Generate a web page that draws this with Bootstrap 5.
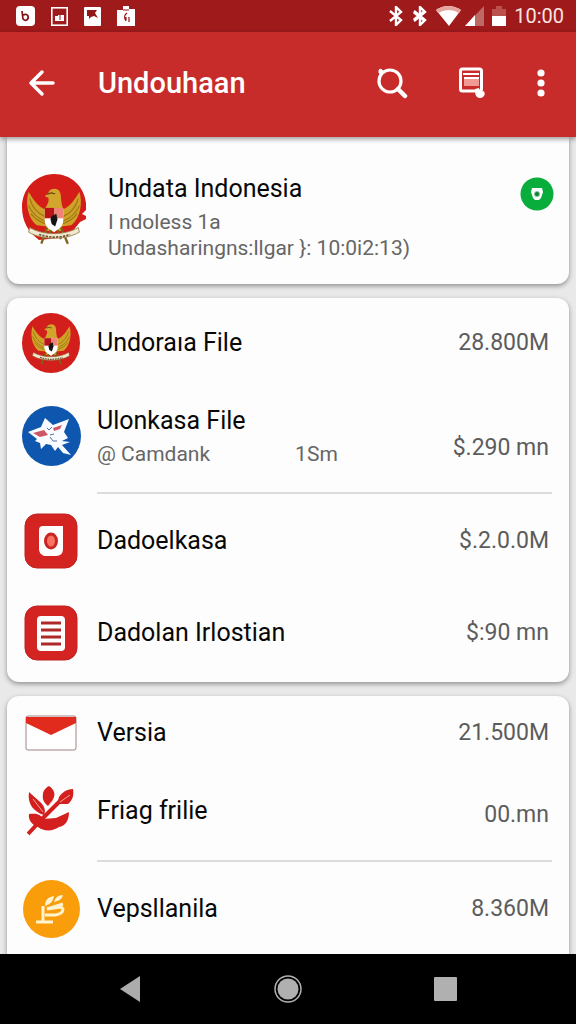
<!DOCTYPE html>
<html lang="id">
<head>
<meta charset="utf-8">
<meta name="viewport" content="width=device-width, initial-scale=1">
<title>Undouhaan</title>
<link href="https://cdn.jsdelivr.net/npm/bootstrap@5.3.0/dist/css/bootstrap.min.css" rel="stylesheet">
<style>
body{font-family:Roboto,"Liberation Sans",sans-serif;background:#e9e9ea;color:#0b0b0b}
svg{display:block;flex-shrink:0}
.status{height:32px;background:#9f1a1b;padding:0 12px 0 16px;font-size:20px;line-height:32px;color:#fbe4e2}
.appbar{height:105px;background:#c72c2a;padding:0 22px 4px 28px;box-shadow:0 2px 5px rgba(0,0,0,.4);z-index:2}
.appbar h1{font-size:29px;line-height:40px;font-weight:500;margin:0 auto 0 42px}
.tools{gap:50px}
.tool{line-height:0}
.content{margin:0 7px;gap:14px;min-height:0}
.panel{border:0;border-radius:12px;box-shadow:0 2px 5px rgba(0,0,0,.38);background:#fdfdfd}
.panel-top{border-radius:0 0 12px 12px;min-height:147px;padding:36px 15px 22px 15px}
.panel-last{border-radius:12px 12px 0 0}
.name{font-size:25px;line-height:32px;color:#080808}
.detail{font-size:21px;line-height:26px;color:#666}
.amount{font-size:23px;line-height:32px;color:#5c5c5c}
.entry{display:grid;grid-template-columns:60px 1fr auto;column-gap:16px;align-items:center;padding:0 20px 0 14px;min-height:90px}
.entry svg{justify-self:center}
.h-mail{min-height:74px}
.h-tall{min-height:104px}
.h-mid{min-height:94px}
.rule{height:2px;margin:0 17px 0 90px;background:#dcdcdc}
.sysbar{height:70px;background:#000;padding:0 100px;z-index:2}
</style>
</head>
<body>
<svg width="0" height="0" class="position-absolute" aria-hidden="true">
<defs>
<symbol id="garuda" viewBox="4 8 52 50">
<path d="M8 12C5 21 7 35 15 41l9 1V28C17 26 12 19 8 12Z" fill="#cfa126"/>
<path d="M52 12c3 9 1 23-7 29l-9 1V28c7-2 12-9 16-16Z" fill="#cfa126"/>
<path d="M9 18c2 8 7 13 14 16M8 24c3 7 8 11 15 14M10 31c3 4 7 7 13 9M51 18c-2 8-7 13-14 16M52 24c-3 7-8 11-15 14M50 31c-3 4-7 7-13 9" fill="none" stroke="#9a7618" stroke-width="1"/>
<path d="M25 13c1-4 8-5 10-1 2 4 0 9 4 17l-3 17H24l-3-17c4-7 5-9 4-12l-3-1Z" fill="#d2a52c"/>
<path d="M24 14l4-1 3 1" stroke="#604a10" fill="none"/>
<path d="M22 26h16v11c0 5-4 8-8 10-4-2-8-5-8-10Z" fill="#fff"/>
<path d="M22 26h8v9h-8Z" fill="#b91518"/><path d="M30 26h8v9h-8Z" fill="#ee8377"/>
<path d="M28 33l4-2 1 5-2 6-3-2-1-4Z" fill="#151515"/>
<path d="M24 43l-5 14M36 43l6 14M27 45l-2 8M33 45l3 8" stroke="#80621a" stroke-width="2"/>
<path d="M9 43c12 7 30 7 42 0l1 4c-12 7-32 7-44 0Z" fill="#f0e8d0" stroke="#927842" stroke-width=".7"/>
<path d="M17 49c9 3 18 3 27 0" fill="none" stroke="#6d5a32" stroke-width="1.5" stroke-dasharray="2 1"/>
</symbol>
<symbol id="bt" viewBox="0 0 16 20"><path d="M2 5l11 9-5 5V1l5 5L2 15" fill="none" stroke="#fff" stroke-width="2.4"/></symbol>
</defs>
</svg>
<div class="d-flex flex-column vh-100 overflow-hidden">
<div class="status d-flex align-items-center justify-content-between flex-shrink-0">
<div class="d-flex align-items-center gap-3">
<svg width="19" height="20" viewBox="0 0 19 20"><rect width="19" height="20" rx="4" fill="#fff"/><path d="M6 5l1 8c3 3 6 0 5-3-1-2-3-2-5-1" fill="none" stroke="#841313" stroke-width="1.7"/></svg>
<svg width="17" height="19" viewBox="0 0 17 19"><rect x=".8" y=".8" width="15.4" height="17.4" fill="none" stroke="#fff" stroke-width="1.6"/><path d="M4 9h3V8h6v6H4Z" fill="#fff"/><path d="M9 8v5" stroke="#9f1a1b"/></svg>
<svg width="17" height="19" viewBox="0 0 17 19"><rect width="17" height="19" rx="1" fill="#fff"/><path d="M3 3h10l-2 3 3 5-4-2-3 1-2 2V9H3Z" fill="#941516"/></svg>
<svg width="18" height="20" viewBox="0 0 18 20"><path d="M0 4h6V0h6v3h6v17H0Z" fill="#fff"/><path d="M6 4h6M10 7c-3 2-3 5-1 8M9 11v3M12 11v5" fill="none" stroke="#941516" stroke-width="1.2"/></svg>
</div>
<div class="d-flex align-items-center">
<svg width="16" height="20" class="me-2"><use href="#bt"/></svg>
<svg width="16" height="20" class="me-2"><use href="#bt"/><path d="M2 6l10 8M2 14L12 6" stroke="#fff" stroke-width="3"/></svg>
<svg width="25" height="20" viewBox="0 0 25 20" class="me-1"><path d="M0 4Q12-4 25 4L13 20Z" fill="#fff"/><path d="M0 4Q12-4 25 4l-2 3Q13 1 2 7Z" fill="#e6a6a0"/></svg>
<svg width="19" height="20" viewBox="0 0 19 20" class="me-2"><path d="M19 0v20H0Z" fill="#bd6964"/><path d="M10 9v11H0Z" fill="#fff"/></svg>
<svg width="14" height="20" viewBox="0 0 14 20" class="me-2"><path d="M0 3h4V0h6v3h4v17H0Z" fill="#bb514d"/><path d="M0 10h14v10H0Z" fill="#fff"/></svg>
<span>10:00</span>
</div>
</div>
<header class="appbar d-flex align-items-center text-white position-relative flex-shrink-0">
<button class="tool btn border-0 p-0" aria-label="Kembali"><svg width="28" height="28" viewBox="0 0 28 28"><path d="M14 3L3 14l11 11M3 14h22" fill="none" stroke="#fff" stroke-width="3.5" stroke-linejoin="round" stroke-linecap="round"/></svg></button>
<h1>Undouhaan</h1>
<div class="tools d-flex align-items-center">
<button class="tool btn border-0 p-0" aria-label="Cari"><svg width="32" height="32" viewBox="0 0 32 32"><circle cx="14" cy="14" r="11" fill="none" stroke="#fff" stroke-width="3.2"/><path d="M22 22l7 7" stroke="#fff" stroke-width="4.5" stroke-linecap="round"/><path d="M3 3l2-1 3 3-3 2-2-1Z" fill="#fff" stroke="#fff"/></svg></button>
<button class="tool btn border-0 p-0" aria-label="Daftar"><svg width="28" height="32" viewBox="0 0 28 32"><rect x="2.5" y="2" width="21" height="22" rx="2" fill="none" stroke="#fff" stroke-width="3"/><path d="M5 7h16" stroke="#fff" stroke-width="2"/><path d="M6 11h15v8H6Z" fill="#f19a93"/><path d="M6 11h15" stroke="#fff" stroke-width="2"/><path d="M17 22c0 3 0 9 5 9 5 0 6-6 3-7l-3 1-1-4Z" fill="#fff"/></svg></button>
<button class="tool btn border-0 p-0" aria-label="Menu lainnya"><svg width="18" height="28" viewBox="0 0 18 28"><g fill="#fff"><circle cx="5" cy="4" r="3.6"/><circle cx="5" cy="14" r="3.6"/><circle cx="5" cy="24" r="3.6"/></g></svg></button>
</div>
</header>
<main class="content flex-grow-1 d-flex flex-column">
<section class="panel panel-top d-flex align-items-start flex-shrink-0">
<svg width="66" height="74" viewBox="0 0 66 74" role="img" aria-label="Lambang Garuda"><path d="M32 1C14 1 0 16 0 34c0 14 6 25 17 33l29-3 12-15 6-3v-3l-4-2 4-4V30C62 13 49 1 32 1Z" fill="#d41d18"/><use href="#garuda" x="2" y="14" width="60" height="58"/></svg>
<div class="ms-3 ps-1 flex-grow-1">
<h2 class="name fw-normal mb-1">Undata Indonesia</h2>
<div class="detail">I ndoless 1a</div>
<div class="detail text-nowrap">Undasharingns:llgar }: 10:0i2:13)</div>
</div>
<svg width="34" height="34" viewBox="0 0 34 34" class="mt-1"><circle cx="17" cy="17" r="16.5" fill="#08ad3b"/><path d="M12 11h10l1 4-2 6-2 2h-4l-2-2-2-6Z" fill="#fff"/><circle cx="17" cy="17" r="2.6" fill="#14813a" stroke="#87ce9d"/></svg>
</section>
<section class="panel flex-shrink-0 pb-1">
<div class="entry">
<svg width="58" height="60" viewBox="0 0 58 60"><ellipse cx="29" cy="30" rx="29" ry="30" fill="#d31f1b"/><use href="#garuda" x="6" y="10" width="46" height="42"/></svg>
<span class="name">Undoraıa File</span><span class="amount">28.800M</span>
</div>
<div class="entry h-tall pb-2">
<svg width="59" height="60" viewBox="0 0 59 60"><ellipse cx="29.500" cy="30" rx="29.500" ry="30" fill="#0f56ae"/><path d="M6 26l13-5 4-9 8 7 16-6-5 13 4 6-6 3 8 1-8 3 9 10-8-2-5-6-3 4-4-6-5-1-5 5-1-6-5-2 2-2Z" fill="#f8fbff"/><path d="M11 27l11-3 4 5-8 2ZM31 22l9-3-2 4-6 2Z" fill="#ce5767"/><path d="M25 22l2 2 3-3M28 31l3 4h4M28 29l4-1" stroke="#5871a0" fill="none"/></svg>
<div><div class="name">Ulonkasa File</div><div class="detail row g-0 pt-1"><span class="col-7">@ Camdank</span><span class="col-5">1Sm</span></div></div>
<span class="amount pt-4">$.290 mn</span>
</div>
<div class="rule"></div>
<div class="entry h-mid">
<svg width="54" height="56" viewBox="0 0 54 56"><rect x="1" y="1" width="52" height="54" rx="12" fill="#d42422" stroke="#bf211f"/><path d="M19 13h20v23q0 7-7 7H20q-5-2-5-7V17q0-4 4-4Z" fill="#fff"/><ellipse cx="27" cy="28" rx="7" ry="8.500" fill="#c92522"/><ellipse cx="27" cy="28" rx="4" ry="5.500" fill="#fa7260"/></svg>
<span class="name">Dadoelkasa</span><span class="amount">$.2.0.0M</span>
</div>
<div class="entry">
<svg width="54" height="56" viewBox="0 0 54 56"><rect x="1" y="1" width="52" height="54" rx="12" fill="#d42422" stroke="#bf211f"/><rect x="13" y="11" width="28" height="35" rx="4" fill="#fff"/><path d="M17 18h20M17 25h20M17 32h20M17 39h20" stroke="#af2929" stroke-width="3"/></svg>
<span class="name">Dadolan Irlostian</span><span class="amount">$:90 mn</span>
</div>
</section>
<section class="panel panel-last flex-grow-1 flex-shrink-0">
<div class="entry h-mail">
<svg width="52" height="36" viewBox="0 0 52 36"><rect x="1" y="1" width="50" height="34" rx="2" fill="#fff" stroke="#a28285"/><path d="M1 2h50v6L26 20 1 8Z" fill="#e02b1d"/></svg>
<span class="name">Versia</span><span class="amount">21.500M</span>
</div>
<div class="entry pb-2">
<svg width="48" height="50" viewBox="0 0 48 50"><g fill="#d3201e"><path d="M2 6l10 9c6 5 7 10 5 14C7 26 0 18 2 6ZM16 8c0-4 4-7 6-8 6 4 7 9 3 15l-4 5c-4-3-6-7-5-12ZM32 11c3-4 7-8 14-8 1 6 0 11-5 15H30ZM2 28c7-1 12 0 14 5l13-1 13-6c0 9-4 14-10 15-7 5-16 4-21 0C5 39 1 34 2 28Z"/></g><path d="M1 48l15-16L37 11" fill="none" stroke="#d3201e" stroke-width="4"/><path d="M6 13l10 13M22 19l4-5M33 16l10-7" stroke="#f6a39b" fill="none"/></svg>
<span class="name">Friag frilie</span><span class="amount pt-2">00.mn</span>
</div>
<div class="rule"></div>
<div class="entry h-mid">
<svg width="57" height="58" viewBox="0 0 57 58"><ellipse cx="28.500" cy="29" rx="28.500" ry="29" fill="#fa9d0b"/><path d="M13 42h17M20 26v16M22 35h10q8-1 8-6l-2-2-14 2 16-5" fill="none" stroke="#fff4cf" stroke-width="3"/><path d="M22 26c0-6 3-9 9-10-1 5-3 8-9 10ZM31 22c1-4 4-7 9-7-1 4-4 6-9 7Z" fill="#fff4cf"/></svg>
<span class="name">Vepsllanila</span><span class="amount">8.360M</span>
</div>
</section>
</main>
<nav class="sysbar d-flex align-items-center justify-content-between flex-shrink-0 position-relative" aria-label="Navigasi sistem">
<button class="tool btn border-0 p-0 ms-3" aria-label="Kembali"><svg width="28" height="28" viewBox="0 0 28 28"><path d="M4 14L24 1v26Z" fill="#acacac"/></svg></button>
<button class="tool btn border-0 p-0" aria-label="Beranda"><svg width="28" height="28" viewBox="0 0 28 28"><circle cx="14" cy="14" r="13" fill="none" stroke="#b0b0b0" stroke-width="1.5"/><circle cx="14" cy="14" r="10.500" fill="#b0b0b0"/></svg></button>
<button class="tool btn border-0 p-0 me-3" aria-label="Aplikasi terbaru"><svg width="28" height="28" viewBox="0 0 28 28"><rect x="2" y="2" width="23" height="24" rx="1" fill="#b0b0b0"/></svg></button>
</nav>
</div>
<script src="https://cdn.jsdelivr.net/npm/bootstrap@5.3.0/dist/js/bootstrap.bundle.min.js"></script>
</body>
</html>
